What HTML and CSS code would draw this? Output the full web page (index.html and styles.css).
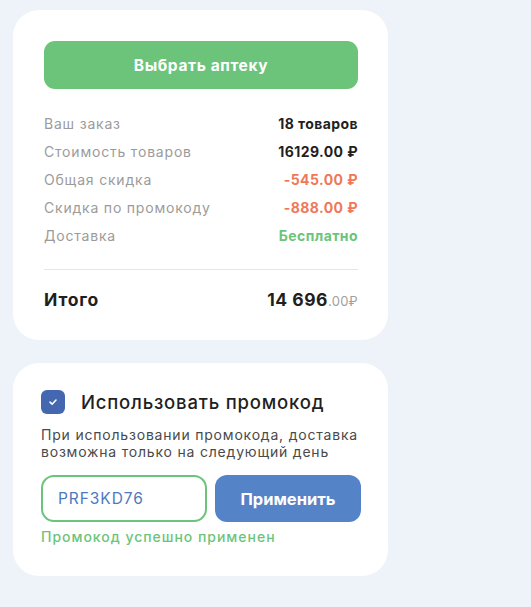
FILE: index.html
```html
<!DOCTYPE html>
<html lang="ru">
<head>
<meta charset="utf-8">
<link rel="stylesheet" href="styles.css">
</head>
<body>
<div class="page">
  <section class="card summary">
    <button class="btn-green">Выбрать аптеку</button>
    <div class="rows">
      <div class="row"><span class="label">Ваш заказ</span><span class="val">18 товаров</span></div>
      <div class="row"><span class="label">Стоимость товаров</span><span class="val">16129.00 ₽</span></div>
      <div class="row"><span class="label">Общая скидка</span><span class="val red">-545.00 ₽</span></div>
      <div class="row"><span class="label">Скидка по промокоду</span><span class="val red">-888.00 ₽</span></div>
      <div class="row"><span class="label">Доставка</span><span class="val green">Бесплатно</span></div>
    </div>
    <div class="divider"></div>
    <div class="total">
      <span class="total-label">Итого</span>
      <span class="total-val">14 696<span class="cents">.00₽</span></span>
    </div>
  </section>
  <section class="card promo">
    <div class="promo-head">
      <span class="check">
        <svg width="12" height="12" viewBox="0 0 12 12"><path d="M3 6.2 L5.1 8.2 L9 4" fill="none" stroke="#fff" stroke-width="1.6" stroke-linecap="round" stroke-linejoin="round"/></svg>
      </span>
      <span class="promo-title">Использовать промокод</span>
    </div>
    <p class="promo-desc">При использовании промокода, доставка<br>возможна только на следующий день</p>
    <div class="promo-form">
      <div class="promo-input">PRF3KD76</div>
      <button class="btn-blue">Применить</button>
    </div>
    <p class="promo-ok">Промокод успешно применен</p>
  </section>
</div>
</body>
</html>
```
FILE: styles.css
```css
* { box-sizing: border-box; }
html, body { margin: 0; padding: 0; }
body {
  background: #eef2f9;
  font-family: "Inter", "Noto Sans", sans-serif;
  letter-spacing: 0.05em;
  width: 531px;
  height: 607px;
  overflow: hidden;
}
.page {
  padding: 10px 0 0 13px;
  display: flex;
  flex-direction: column;
  gap: 23px;
}
.card {
  width: 375px;
  background: #fff;
  border-radius: 26px;
}
.summary { padding: 31px 30px 26px 31px; }
.btn-green {
  display: block;
  width: 100%;
  height: 48px;
  border: none;
  border-radius: 11px;
  background: #6cc47b;
  color: #fff;
  font-family: inherit;
  font-weight: 700;
  font-size: 15.5px;
  letter-spacing: 0.04em;
}
.rows { margin-top: 20px; }
.row {
  height: 28px;
  display: flex;
  justify-content: space-between;
  align-items: center;
  font-size: 14px;
}
.label { color: #9b9b9b; }
.val { font-weight: 700; color: #1f1f1f; letter-spacing: 0.03em; }
.val.red { color: #f07858; }
.val.green { color: #6cc47b; }
.divider { margin-top: 20px; height: 1px; background: #e6e6e6; }
.total {
  margin-top: 14px;
  height: 30px;
  display: flex;
  justify-content: space-between;
  align-items: center;
}
.total-label { font-size: 17.5px; font-weight: 700; color: #1f1f1f; }
.total-val { font-size: 17.5px; font-weight: 700; color: #1f1f1f; letter-spacing: 0.03em; }
.cents { font-size: 13px; font-weight: 400; color: #a0a0a0; letter-spacing: 0.02em; }
.promo { padding: 27px 27px 31px 28px; }
.promo-head { display: flex; align-items: center; height: 24px; }
.check {
  width: 24px; height: 24px;
  border-radius: 6px;
  background: #4467b0;
  display: flex; align-items: center; justify-content: center;
}
.promo-title { margin-left: 16px; font-size: 18.5px; font-weight: 500; color: #1f1f1f; }
.promo-desc {
  margin: 12px 0 0;
  font-size: 14px;
  line-height: 17px;
  color: #4a4a4a;
  white-space: nowrap;
}
.promo-form {
  margin-top: 15px;
  display: flex;
  gap: 8px;
}
.promo-input {
  width: 166px;
  height: 47px;
  border: 2px solid #6cc47b;
  border-radius: 13px;
  display: flex; align-items: center;
  padding-left: 15px;
  font-size: 15.5px;
  color: #4f78c0;
  letter-spacing: 0.06em;
}
.btn-blue {
  width: 146px;
  height: 47px;
  border: none;
  border-radius: 12px;
  background: #5483c8;
  color: #fff;
  font-family: inherit;
  font-size: 16.5px;
  font-weight: 700;
}
.promo-ok {
  margin: 6px 0 0;
  font-size: 14px;
  line-height: 17px;
  color: #6cc47b;
  font-weight: 500;
  letter-spacing: 0.07em;
}
```
